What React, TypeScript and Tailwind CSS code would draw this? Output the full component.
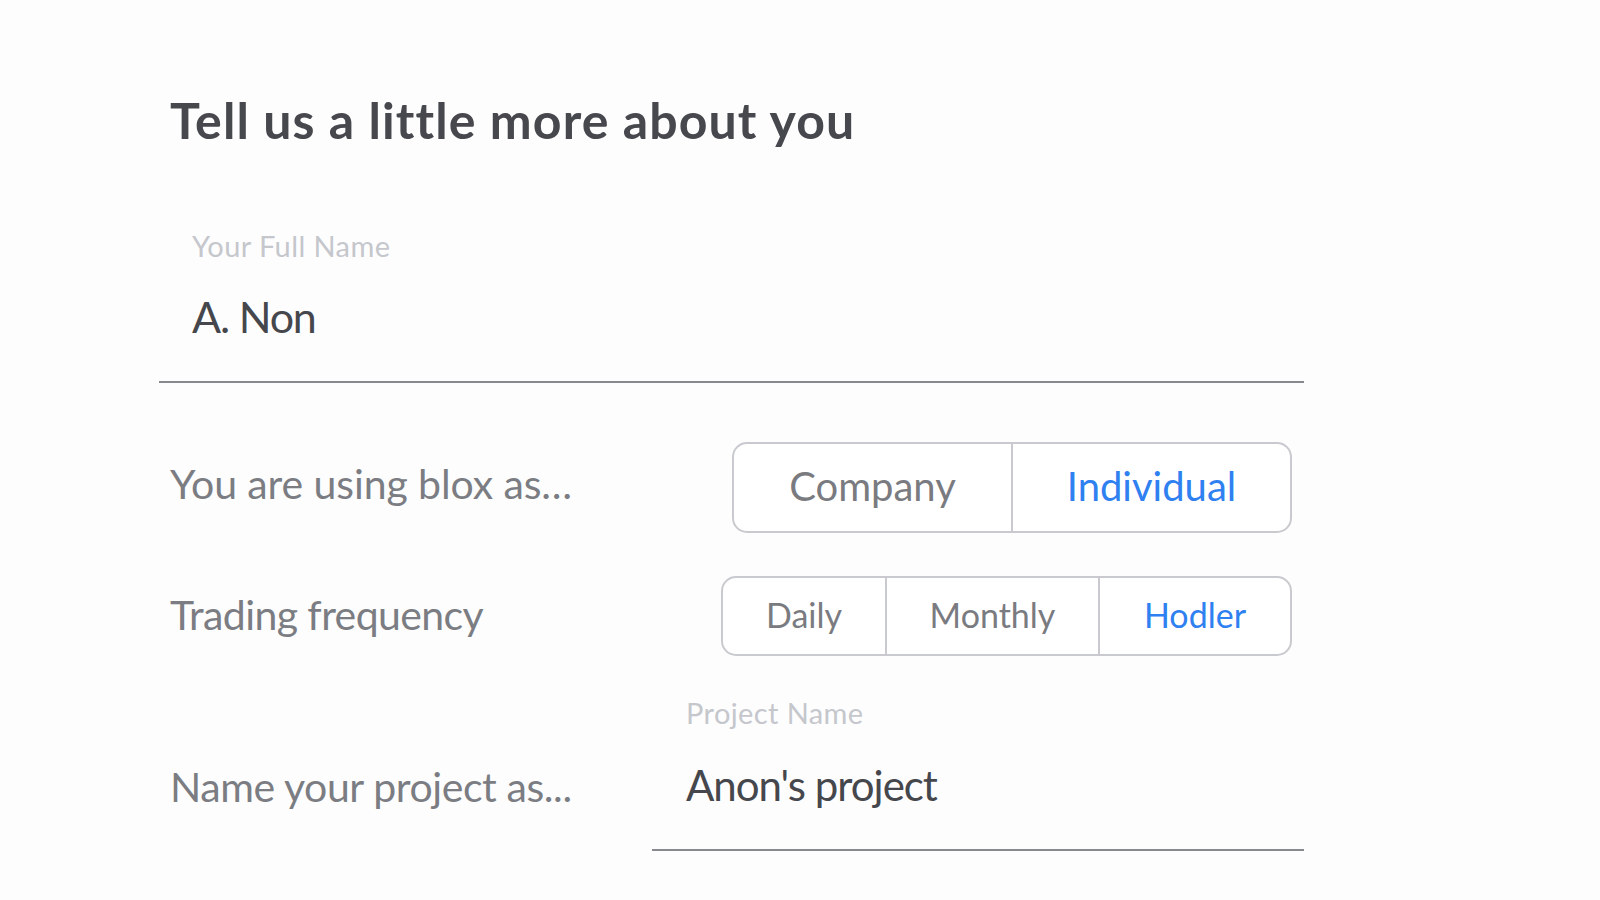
import React from "react";

const font = { fontFamily: "Lato, 'Noto Sans', sans-serif" };

function Segmented({
  options,
  active,
  textClass,
  boxClass,
  segClasses,
}: {
  options: string[];
  active: string;
  textClass: string;
  boxClass: string;
  segClasses: string[];
}) {
  return (
    <div
      className={`flex ${boxClass} border-2 border-[#c9cacf] rounded-[15px] overflow-hidden bg-white`}
    >
      {options.map((o, i) => (
        <div
          key={o}
          className={`flex items-center justify-center ${segClasses[i]} ${
            i > 0 ? "border-l-2 border-[#c9cacf]" : ""
          } ${textClass} leading-none ${
            o === active ? "text-[#2f80f0]" : "text-[#7a7b80]"
          }`}
        >
          <span className="pb-[3px]">{o}</span>
        </div>
      ))}
    </div>
  );
}

export default function App() {
  return (
    <div
      className="min-h-[900px] w-full bg-[#fdfdfe] text-[#46484d]"
      style={font}
    >
      <div className="pt-[95px] pl-[159px] w-[1304px]">
        <h1 className="pl-[11px] text-[50px] leading-none font-bold tracking-[1.1px] text-[#46484d]">
          Tell us a little more about you
        </h1>

        <div className="mt-[86px]">
          <div className="pl-[33px] text-[29px] leading-none tracking-[0.4px] text-[#c5c7cc]">
            Your Full Name
          </div>
          <div className="pl-[33px] mt-[35px] text-[43px] leading-none tracking-[-1.2px] text-[#45474c]">
            A. Non
          </div>
          <div className="mt-[43px] h-[2px] bg-[#88898e]" />
        </div>

        <div className="mt-[59px] flex items-center justify-between">
          <div className="pl-[11px] pb-[8px] text-[41px] leading-none tracking-[-0.1px] text-[#7b7d83]">
            You are using blox as…
          </div>
          <div className="mr-[12px]">
            <Segmented
              options={["Company", "Individual"]}
              active="Individual"
              textClass="text-[40px]"
              boxClass="h-[91px] w-[560px]"
              segClasses={["flex-1", "flex-1"]}
            />
          </div>
        </div>

        <div className="mt-[43px] flex items-center justify-between">
          <div className="pl-[11px] pb-[4px] text-[41px] leading-none tracking-[-0.6px] text-[#7b7d83]">
            Trading frequency
          </div>
          <div className="mr-[12px]">
            <Segmented
              options={["Daily", "Monthly", "Hodler"]}
              active="Hodler"
              textClass="text-[34px]"
              boxClass="h-[80px]"
              segClasses={["w-[162px]", "w-[213px]", "w-[192px]"]}
            />
          </div>
        </div>

        <div className="mt-[42px] flex">
          <div className="w-[493px] pl-[11px] pt-[68px] text-[41px] leading-none tracking-[-0.4px] text-[#7b7d83]">
            Name your project as...
          </div>
          <div className="flex-1">
            <div className="pl-[34px] text-[29px] leading-none tracking-[0.4px] text-[#c5c7cc]">
              Project Name
            </div>
            <div className="pl-[34px] mt-[37px] text-[42px] leading-none tracking-[-1px] text-[#45474c]">
              Anon's project
            </div>
            <div className="mt-[43px] h-[2px] bg-[#88898e]" />
          </div>
        </div>
      </div>
    </div>
  );
}
